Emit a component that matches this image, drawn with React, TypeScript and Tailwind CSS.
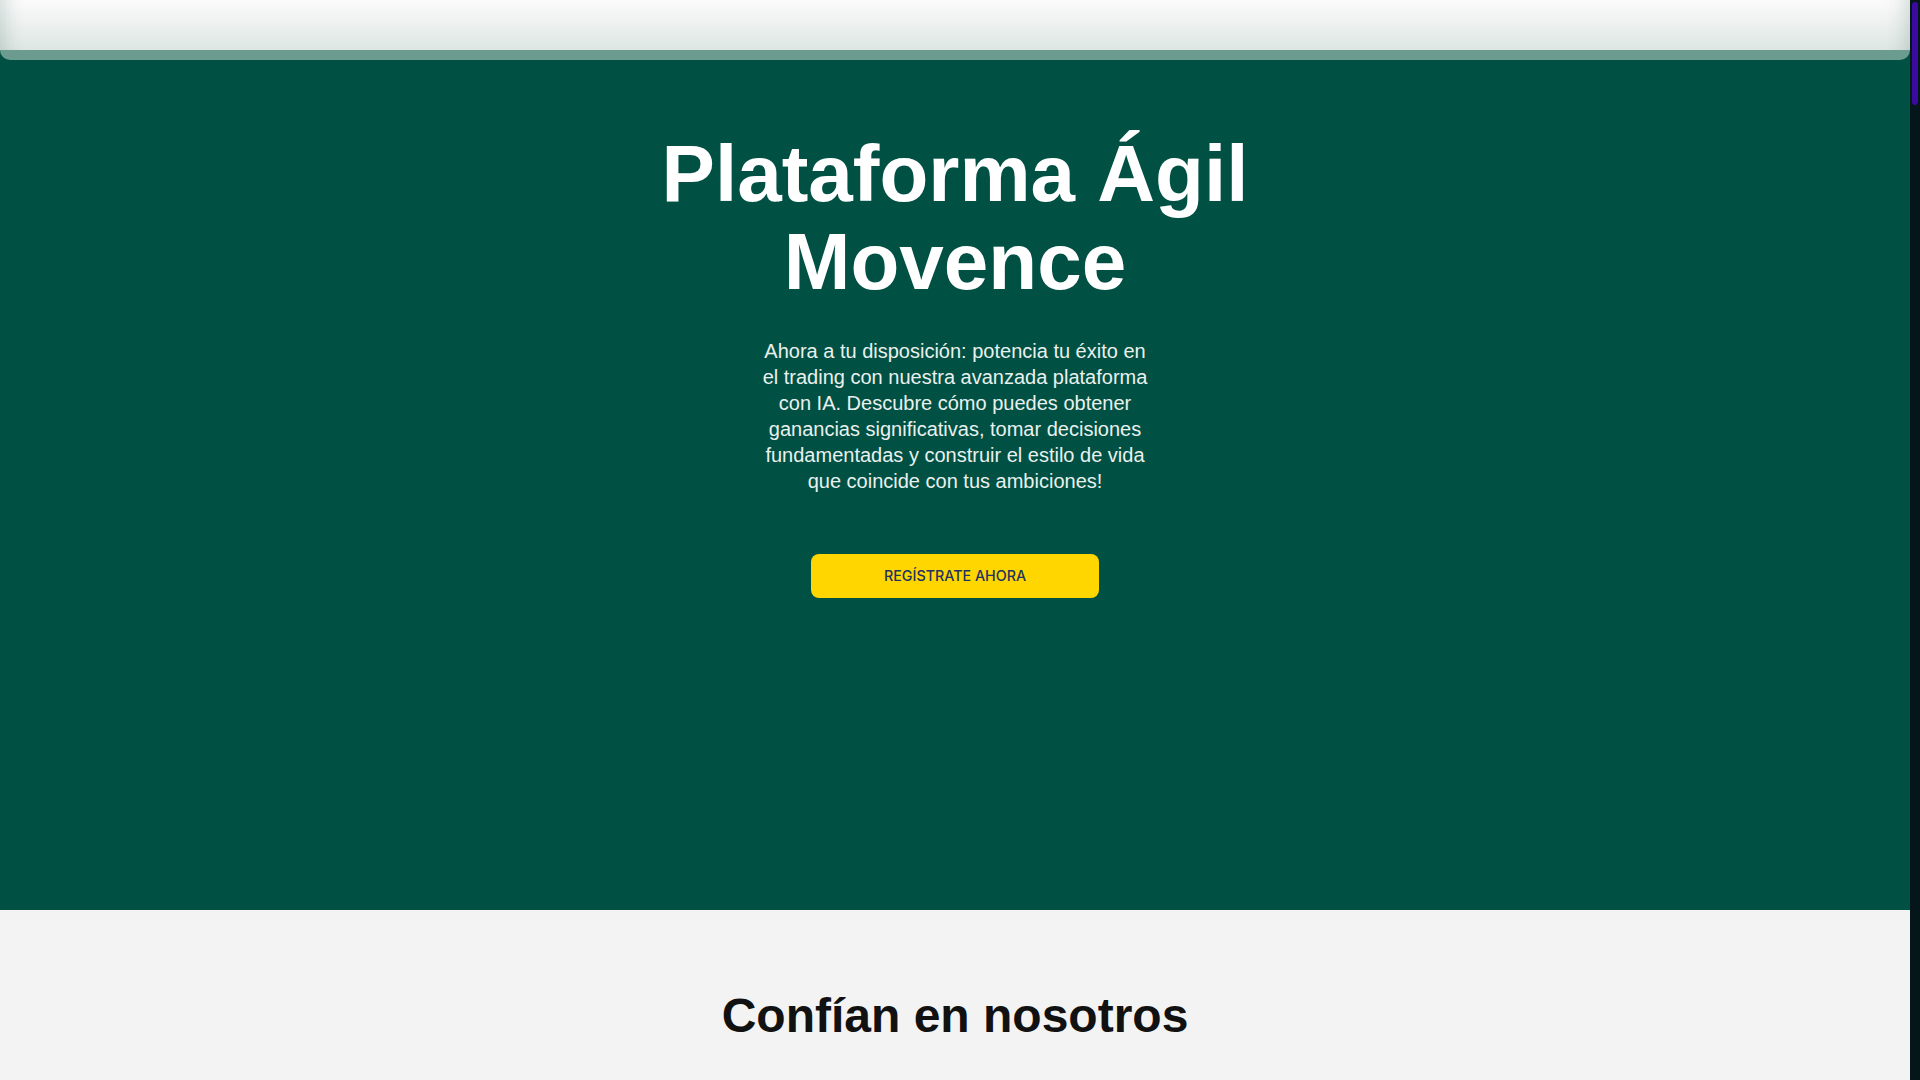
const Header = () => (
    <header className="flex flex-col">
        <div className="h-[50px] bg-gradient-to-b from-[#fbfbfb] to-[#dde6e3] shadow-[inset_24px_0_20px_-20px_rgba(0,60,50,0.18),inset_-24px_0_20px_-20px_rgba(0,60,50,0.18)]"></div>
        <div className="h-[10px] rounded-b-[10px] bg-[#6c9c8f]"></div>
    </header>
);

const Hero = () => (
    <section className="bg-[#005143] pb-[312px]">
        <Header />
        <div className="flex flex-col items-center pt-[70px] text-center">
            <h1 className="text-[80px] font-bold leading-[88px] text-white">
                Plataforma Ágil
                <br />
                Movence
            </h1>
            <p className="mt-[32px] w-[398px] text-[20px] leading-[26px] text-[#eaf0ee]">
                Ahora a tu disposición: potencia tu éxito en el trading con nuestra avanzada plataforma con IA. Descubre cómo puedes obtener ganancias significativas, tomar decisiones fundamentadas y construir el estilo de vida que coincide con tus ambiciones!
            </p>
            <button className="mt-[60px] flex h-[44px] w-[288px] items-center justify-center rounded-[8px] bg-[#ffd600] font-['Inter',sans-serif] text-[14.3px] font-medium text-[#1f3263]">
                REGÍSTRATE AHORA
            </button>
        </div>
    </section>
);

const Trust = () => (
    <section className="flex-1 bg-[#f3f3f3] pt-[77px] text-center">
        <h2 className="text-[48px] font-bold leading-[1.2] text-[#111111]">Confían en nosotros</h2>
    </section>
);

// page scrollbar, drawn since the shot hides the real one
const ScrollBar = () => (
    <aside className="flex w-[10px] shrink-0 flex-col items-center bg-[#041619] pt-[2px]">
        <div className="h-[103px] w-[6px] rounded-full bg-[#3b0a9e]"></div>
    </aside>
);

export default function App() {
    return (
        <div className="flex h-screen overflow-hidden font-['Liberation_Sans',Arial,sans-serif]">
            <main className="flex min-w-0 flex-1 flex-col">
                <Hero />
                <Trust />
            </main>
            <ScrollBar />
        </div>
    );
}
